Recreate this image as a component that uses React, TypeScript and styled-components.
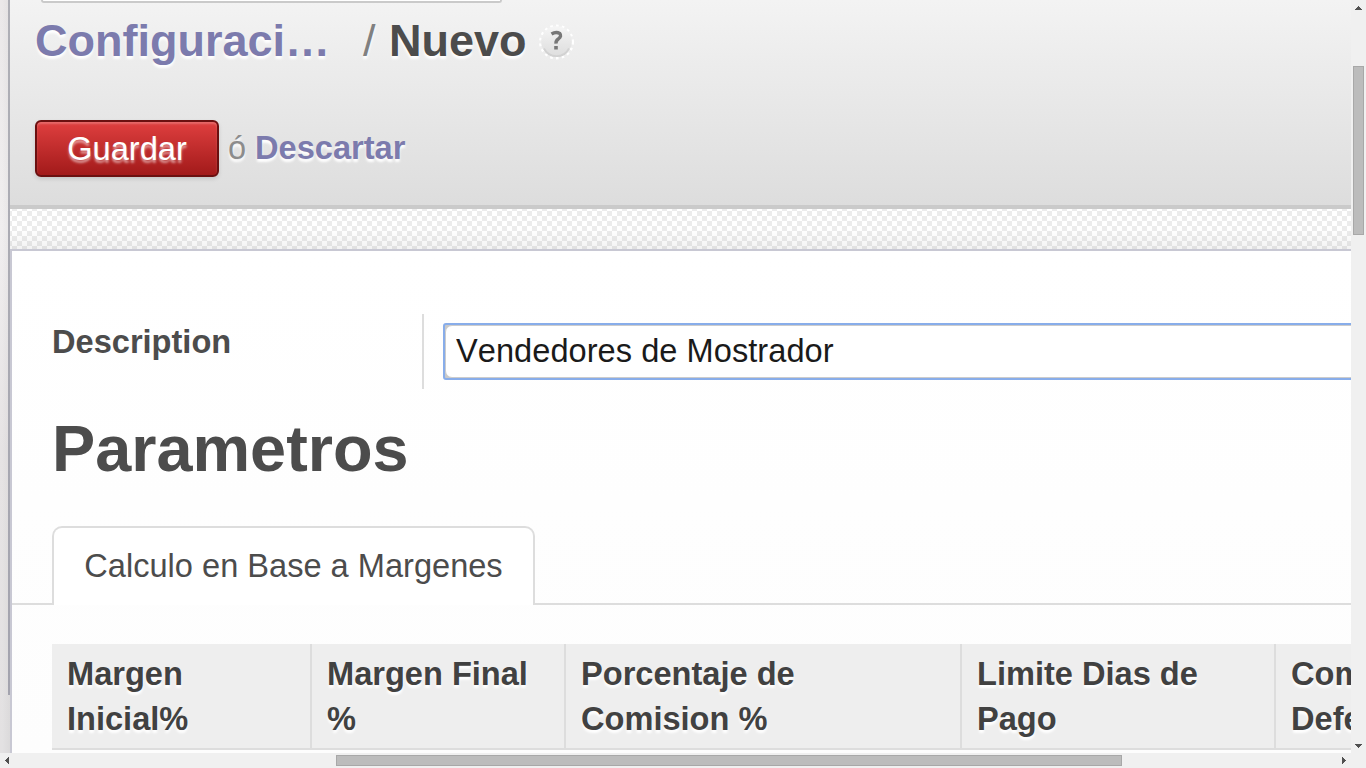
import React from "react";
import styled, { createGlobalStyle } from "styled-components";

const Global = createGlobalStyle`
  * { box-sizing: border-box; }
  body { margin: 0; overflow: hidden; font-family: "Liberation Sans", Arial, sans-serif; font-size: 32.6px; color: #4c4c4c; }
`;

const Window = styled.div`
  display: grid;
  grid-template-columns: 1351px 15px;
  grid-template-rows: 753px 15px;
  width: 1366px;
  height: 768px;
  background: #f0f0f0;
`;

const Viewport = styled.div`
  display: flex;
  overflow: hidden;
  background: #fff;
`;

const LeftMenu = styled.div`
  flex: none;
  width: 10px;
  background: linear-gradient(to right, rgba(0, 0, 0, 0) 2px, rgba(0, 0, 0, 0.035)), linear-gradient(#ebe8e9, #f0eeef 230px, #e6e3e4 450px, #e3e1e2);
`;

const MenuEdge = styled.div`
  width: 2px;
  height: 695px;
  margin-left: 8px;
  background: linear-gradient(#afafb6, #a3a3ae);
`;

const Main = styled.main`
  flex: none;
  width: 1341px;
  overflow: hidden;
`;

const Header = styled.header`
  height: 209px;
  padding-left: 25px;
  background: linear-gradient(#f3f3f3, #dddddd);
  border-bottom: 4px solid #cacaca;
`;

const SearchBox = styled.div`
  width: 461px;
  height: 3px;
  margin-left: 6px;
  background: #fff;
  border: 2px solid #cacaca;
  border-top: 0;
  border-radius: 0 0 6px 6px;
`;

const Title = styled.h1`
  display: flex;
  margin: 13px 0 0;
  height: 50px;
  font-size: 45px;
  line-height: 50px;
  font-weight: normal;
  text-shadow: 0 2.5px 2.5px #fff;
`;

const Crumb = styled.a`
  width: 328px;
  font-weight: bold;
  color: #7c7bad;
`;

const Slash = styled.span`
  width: 26px;
  color: #808080;
`;

const Current = styled.span`
  width: 149px;
  font-weight: bold;
`;

const HelpIcon = styled.svg`
  width: 37px;
  height: 37px;
  margin: 8px 0 0 1px;
`;

const Actions = styled.div`
  display: flex;
  align-items: center;
  height: 57px;
  margin-top: 54px;
`;

const SaveButton = styled.button`
  width: 184px;
  height: 57px;
  padding: 0;
  font: inherit;
  color: #fff;
  background: linear-gradient(#df3f3f, #a21a1a);
  border: 2px solid #6b1010;
  border-radius: 6px;
  text-shadow: 0 2.5px 2.5px rgba(255, 255, 255, 0.55);
  box-shadow: 0 2px 4px rgba(0, 0, 0, 0.12), inset 0 2px 2px rgba(255, 255, 255, 0.22);
`;

const Or = styled.span`
  width: 27px;
  margin-left: 9px;
  color: #8c8c8c;
  line-height: 55px;
  height: 57px;
  text-shadow: 0 2.5px 2.5px #fff;
`;

const Discard = styled(Or)`
  width: auto;
  margin-left: 0;
  font-weight: bold;
  color: #7c7bad;
`;

const Canvas = styled.div`
  height: 40px;
  background: linear-gradient(rgba(0, 0, 0, 0) 20px, rgba(0, 0, 0, 0.05)),
    repeating-conic-gradient(#ececec 0 25%, #fff 0 50%) 2px 2px / 10px 10px;
`;

const Sheet = styled.section`
  height: 504px;
  padding-top: 63px;
  background: linear-gradient(#ffffff, #fdfdfd);
  border-top: 2px solid #c8c8d3;
  border-left: 2px solid #c8c8d3;
`;

const Field = styled.div`
  display: flex;
  height: 75px;
  padding-left: 40px;
`;

const Label = styled.label`
  flex: none;
  width: 372px;
  padding-top: 5px;
  line-height: 45px;
  font-weight: bold;
  border-right: 2px solid #dddddd;
`;

const FocusRing = styled.div`
  flex: none;
  width: 1300px;
  height: 57px;
  margin: 9px 0 0 19px;
  border: 2px solid #88adea;
  border-radius: 3px;
  background: #c9c9c9;
`;

const Input = styled.input`
  display: block;
  width: 100%;
  height: 100%;
  padding: 0 0 2px 10px;
  font: inherit;
  font-kerning: none;
  letter-spacing: 0.04px;
  color: #1a1a1a;
  background: #fff;
  border: 1px solid #cccccc;
  border-radius: 7px;
  outline: 0;
`;

const Heading = styled.h2`
  margin: 24px 0 0 40px;
  height: 72px;
  line-height: 72px;
  font-size: 64.8px;
`;

const Tabs = styled.div`
  display: flex;
  height: 79px;
  margin-top: 41px;
`;

const TabRule = styled.div<{ $width?: number }>`
  flex: ${p => (p.$width ? `0 0 ${p.$width}px` : "1")};
  border-bottom: 2px solid #dddddd;
`;

const Tab = styled.div`
  width: 483px;
  text-align: center;
  line-height: 75px;
  background: #fff;
  border: 2px solid #dddddd;
  border-bottom: 0;
  border-radius: 10px 10px 0 0;
`;

const Table = styled.div`
  display: flex;
  width: 1700px;
  height: 106px;
  margin: 39px 0 0 40px;
  background: #eeeeee;
  border-bottom: 2px solid #dddddd;
`;

const HeadCell = styled.div<{ $width: number }>`
  width: ${p => p.$width}px;
  padding: 7px 0 0 15px;
  line-height: 45px;
  font-weight: bold;
  color: #414141;
  white-space: pre-line;
  border-right: 2px solid #dddddd;
  text-shadow: 0 2.5px 2.5px #fff;
`;

const ScrollTrack = styled.div<{ $vertical?: boolean }>`
  display: flex;
  flex-direction: ${p => (p.$vertical ? "column" : "row")};
  align-items: center;
  justify-content: space-between;
  padding: ${p => (p.$vertical ? "6px 0 5px" : "0 5px")};
  background: #f0f0f0;
`;

const Thumb = styled.div<{ $vertical?: boolean }>`
  width: ${p => (p.$vertical ? 11 : 786)}px;
  height: ${p => (p.$vertical ? 169 : 11)}px;
  margin: ${p => (p.$vertical ? "56px 0 auto" : "0 auto 0 327px")};
  background: #bcbcbc;
  border: 1px solid #a8a8a8;
`;

const Arrow = styled.svg`
  display: block;
  flex: none;
  fill: #505050;
`;

const columns = [
  { text: "Margen\nInicial%", width: 260 },
  { text: "Margen Final\n%", width: 254 },
  { text: "Porcentaje de\nComision %", width: 396 },
  { text: "Limite Dias de\nPago", width: 314 },
  { text: "Comision\nDefecto", width: 300 },
];

export default function App() {
  return (
    <>
      <Global />
      <Window>
        <Viewport>
          <LeftMenu><MenuEdge /></LeftMenu>
          <Main>
            <Header>
              <SearchBox />
              <Title>
                <Crumb>Configuraci…</Crumb>
                <Slash>/</Slash>
                <Current>Nuevo</Current>
                <HelpIcon viewBox="0 0 37 37">
                  <defs>
                    <linearGradient id="knob" x1="0" y1="0" x2="0" y2="1">
                      <stop offset="0" stopColor="#f6f6f6" />
                      <stop offset="0.6" stopColor="#e6e6e6" />
                      <stop offset="1" stopColor="#dedede" />
                    </linearGradient>
                    <filter id="soft" x="-20%" y="-20%" width="140%" height="140%">
                      <feGaussianBlur stdDeviation="0.7" />
                    </filter>
                  </defs>
                  <circle cx="17.5" cy="18" r="16.2" fill="none" stroke="#fff" strokeWidth="2.6" strokeDasharray="2.6 3.2" />
                  <g filter="url(#soft)">
                    <circle cx="17.5" cy="17.500" r="15.300" fill="url(#knob)" />
                    <path d="M5 24.500a14 14 0 0 0 25 0" fill="none" stroke="#d2d2d2" strokeWidth="1.800" />
                    <path d="M12.500 10q4.600-2.800 8.200-.6q2.400 2.800-1.400 5.600q-2.600 1.800-2.300 4.600M15.200 23.800h3.600" fill="none" stroke="#777" strokeWidth="3.400" />
                  </g>
                </HelpIcon>
              </Title>
              <Actions>
                <SaveButton>Guardar</SaveButton>
                <Or>ó</Or>
                <Discard>Descartar</Discard>
              </Actions>
            </Header>
            <Canvas />
            <Sheet>
              <Field>
                <Label>Description</Label>
                <FocusRing><Input defaultValue="Vendedores de Mostrador" /></FocusRing>
              </Field>
              <Heading>Parametros</Heading>
              <Tabs>
                <TabRule $width={40} />
                <Tab>Calculo en Base a Margenes</Tab>
                <TabRule />
              </Tabs>
              <Table>
                {columns.map(c => <HeadCell key={c.text} $width={c.width}>{c.text}</HeadCell>)}
              </Table>
            </Sheet>
          </Main>
        </Viewport>
        <ScrollTrack $vertical>
          <Arrow width="7" height="4"><path d="M3 0h1v1h1v1h1v1h1v1H0V3h1V2h1V1h1z" /></Arrow>
          <Thumb $vertical />
          <Arrow width="7" height="4"><path d="M0 0h7v1H6v1H5v1H4v1H3V3H2V2H1V1H0z" /></Arrow>
        </ScrollTrack>
        <ScrollTrack>
          <Arrow width="4" height="7"><path d="M4 0v7H3V6H2V5H1V4H0V3h1V2h1V1h1V0z" /></Arrow>
          <Thumb />
          <Arrow width="4" height="7"><path d="M0 0v7h1V6h1V5h1V4h1V3H3V2H2V1H1V0z" /></Arrow>
        </ScrollTrack>
      </Window>
    </>
  );
}
